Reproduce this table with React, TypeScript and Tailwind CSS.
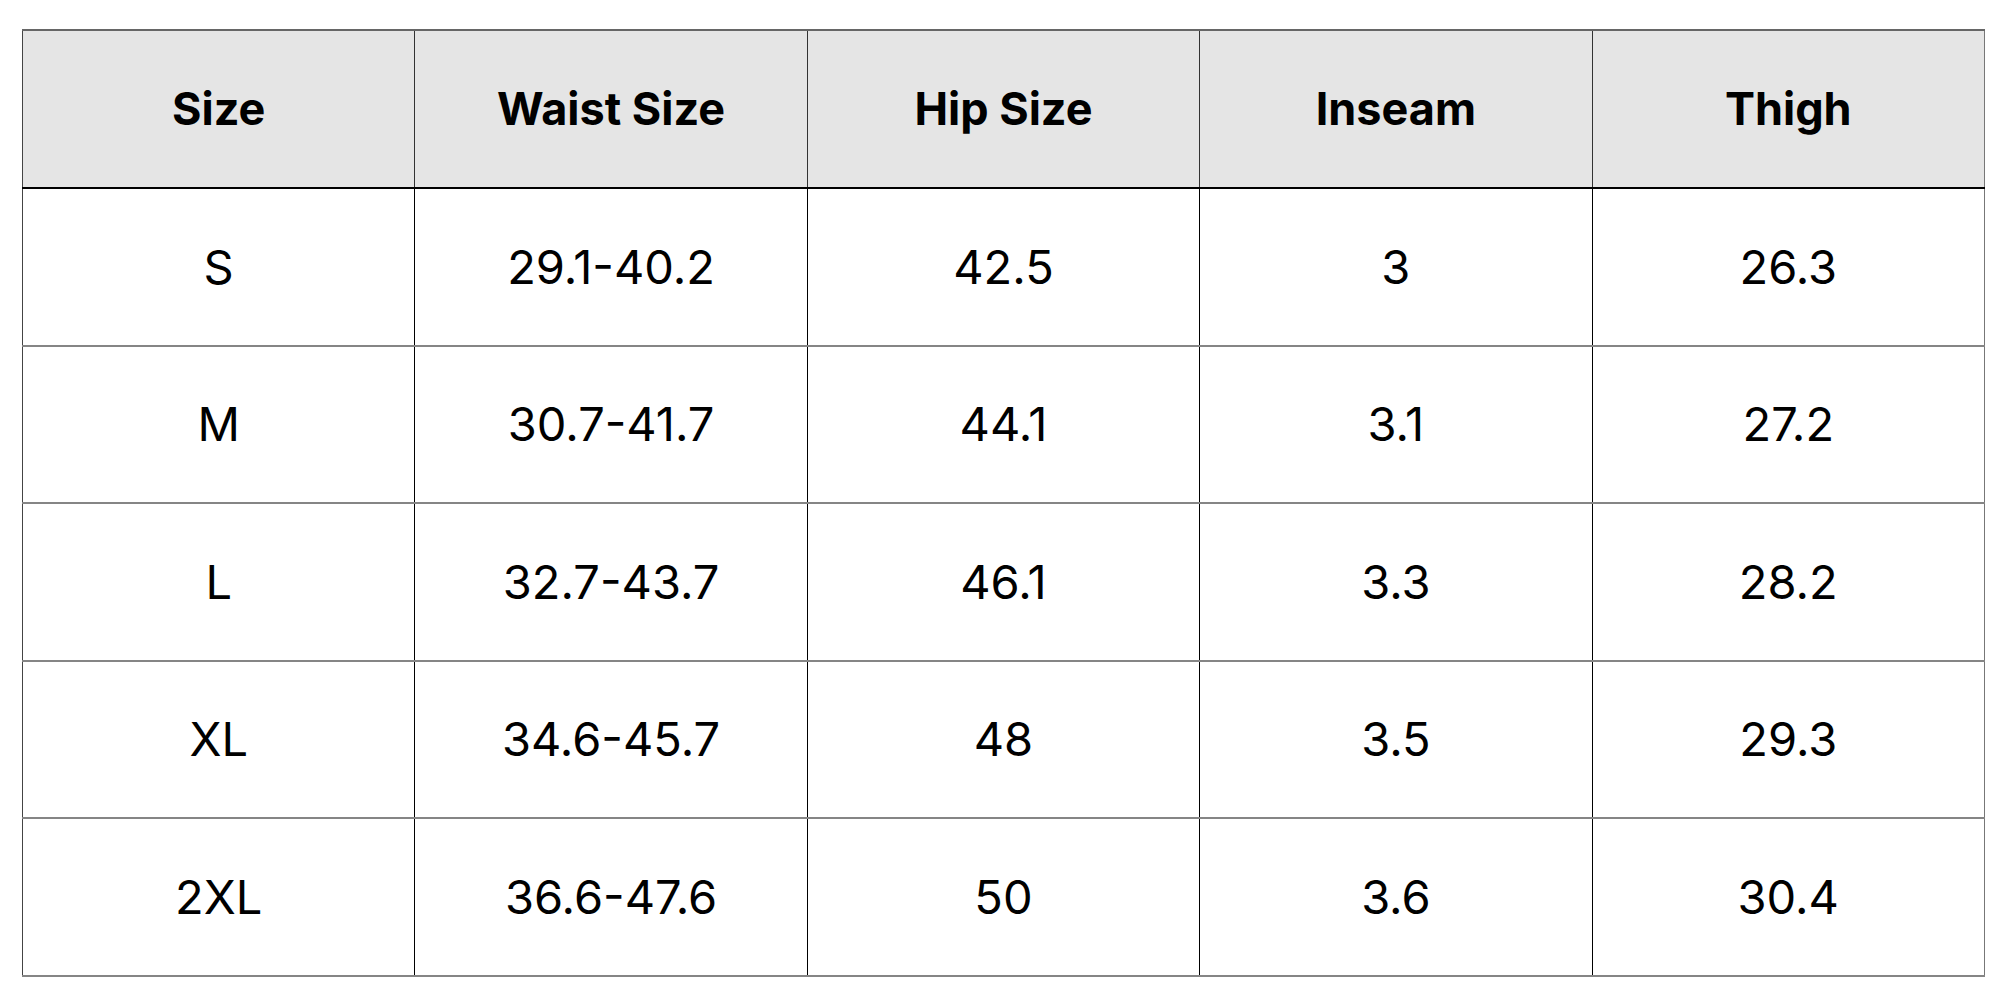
const headers = ["Size", "Waist Size", "Hip Size", "Inseam", "Thigh"];

const rows = [
  ["S", "29.1-40.2", "42.5", "3", "26.3"],
  ["M", "30.7-41.7", "44.1", "3.1", "27.2"],
  ["L", "32.7-43.7", "46.1", "3.3", "28.2"],
  ["XL", "34.6-45.7", "48", "3.5", "29.3"],
  ["2XL", "36.6-47.6", "50", "3.6", "30.4"],
];

function App() {
  return (
    <div className="w-[2000px] h-[1000px] bg-white pt-[29px] pl-[22px] font-['Inter',sans-serif] text-black">
      <table className="w-[1963px] h-[946px] border-collapse table-fixed">
        <thead>
          <tr className="h-[158px] bg-[#e5e5e5]">
            {headers.map((h) => (
              <th
                key={h}
                className="border-x-[1.5px] border-x-[#333] border-t-2 border-t-[#666] border-b-2 border-b-black font-bold text-[45px] text-center align-middle first:border-l-[#444] last:border-r-[#777]"
              >
                {h}
              </th>
            ))}
          </tr>
        </thead>
        <tbody>
          {rows.map((r) => (
            <tr key={r[0]} className="h-[157.6px]">
              {r.map((c, i) => (
                <td
                  key={i}
                  className="border-x-[1.5px] border-x-black border-y-2 border-y-[#858585] text-[47px] text-center align-middle first:border-l-[#444] last:border-r-[#777]"
                >
                  {c}
                </td>
              ))}
            </tr>
          ))}
        </tbody>
      </table>
    </div>
  );
}

export default App;
